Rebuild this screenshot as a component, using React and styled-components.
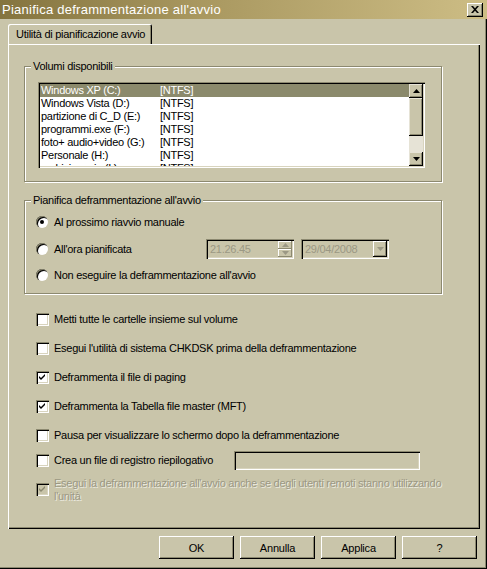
import React from 'react';
import styled, { createGlobalStyle } from 'styled-components';

const Global = createGlobalStyle`
  html, body { margin: 0; padding: 0; background: #c9c5aa; }
  * { box-sizing: border-box; }
`;

const Window = styled.div`
  width: 487px;
  height: 569px;
  background: #c9c5aa;
  display: flex;
  flex-direction: column;
  font-family: "Liberation Sans", Arial, sans-serif;
  font-size: 11px;
  letter-spacing: -0.27px;
  color: #000;
  box-shadow: inset -1px -1px 0 #000, inset -2px -2px 0 #8c8970;
  overflow: hidden;
`;

const TitleBar = styled.div`
  height: 19px;
  display: flex;
  align-items: center;
  justify-content: space-between;
  padding: 0 4px 0 2px;
  background: linear-gradient(to right, #84743f 0%, #a8975f 40%, #cdbd85 100%);
`;

const Title = styled.div`
  color: #fff;
  font-size: 13px;
  letter-spacing: 0.25px;
`;

const CloseBtn = styled.div`
  width: 16px;
  height: 14px;
  background: #c9c5aa;
  box-shadow: inset -1px -1px 0 #000, inset 1px 1px 0 #fff, inset -2px -2px 0 #8c8970;
  display: flex;
  align-items: center;
  justify-content: center;
`;

const Body = styled.div`
  padding: 5px 7px 0 8px;
  display: flex;
  flex-direction: column;
`;

const TabStrip = styled.div`
  display: flex;
  height: 20px;
`;

const Tab = styled.div`
  padding: 0 7px 0 8px;
  display: flex;
  align-items: center;
  height: 20px;
  background: #c9c5aa;
  border-radius: 2px 2px 0 0;
  box-shadow: inset 1px 1px 0 #fff, inset -1px 0 0 #000, inset -2px 0 0 #8c8970;
  position: relative;
  z-index: 1;
  margin-bottom: -1px;
`;

const Panel = styled.div`
  height: 485px;
  box-shadow: inset 1px 1px 0 #fff, inset -1px -1px 0 #000, inset -2px -2px 0 #8c8970;
  padding: 0 0 0 16px;
  display: flex;
  flex-direction: column;
`;

const Group = styled.div`
  position: relative;
  width: 418px;
  height: ${p => p.$h}px;
  margin-top: ${p => p.$mt}px;
  border: 1px solid #8c8970;
  box-shadow: inset 1px 1px 0 #fff, 1px 1px 0 #fff;
  padding: ${p => p.$pad};
`;

const Legend = styled.div`
  position: absolute;
  top: -7px;
  left: 6px;
  padding: 0 2px;
  background: #c9c5aa;
  line-height: 13px;
`;

const ListBox = styled.div`
  width: 387px;
  height: 86px;
  background: #fff;
  box-shadow: inset 1px 1px 0 #8c8970, inset 2px 2px 0 #000, inset -1px -1px 0 #fff, inset -2px -2px 0 #d8d4be;
  padding: 2px;
  display: flex;
  overflow: hidden;
`;

const Rows = styled.div`
  flex: 1;
  overflow: hidden;
`;

const Row = styled.div`
  display: flex;
  height: 13px;
  line-height: 13px;
  padding-left: 1px;
  background: ${p => (p.$sel ? '#8b8a6c' : 'transparent')};
  color: ${p => (p.$sel ? '#fff' : '#000')};
`;

const NameCell = styled.div`
  width: 119px;
  white-space: nowrap;
`;

const ScrollBar = styled.div`
  width: 14px;
  display: flex;
  flex-direction: column;
  background: #e6e3d6;
`;

const ScrollBtn = styled.div`
  height: ${p => p.$h}px;
  background: #c9c5aa;
  box-shadow: inset -1px -1px 0 #000, inset 1px 1px 0 #e6e3d6, inset -2px -2px 0 #8c8970;
  display: flex;
  align-items: center;
  justify-content: center;
`;

const Track = styled.div`
  flex: 1;
`;

const OptRow = styled.div`
  display: flex;
  align-items: center;
  height: ${p => p.$h || 26}px;
  margin-top: ${p => p.$mt || 0}px;
  padding-left: ${p => p.$pl || 0}px;
`;

const Radio = styled.div`
  width: 12px;
  height: 12px;
  border-radius: 50%;
  background: #fff;
  box-shadow: inset 1px 1px 0 #8c8970, inset 2px 2px 0 #000;
  display: flex;
  align-items: center;
  justify-content: center;
  margin-right: 6px;
  flex-shrink: 0;
  &::after {
    content: '';
    width: 4px;
    height: 4px;
    border-radius: 50%;
    background: ${p => (p.$on ? '#000' : 'transparent')};
  }
`;

const Label = styled.span`
  white-space: nowrap;
  flex-shrink: 0;
  width: ${p => (p.$w ? `${p.$w}px` : 'auto')};
  color: ${p => (p.$dis ? '#9b9884' : '#000')};
`;

const Field = styled.div`
  height: 20px;
  width: ${p => p.$w}px;
  margin-left: ${p => p.$ml}px;
  display: flex;
  align-items: center;
  justify-content: space-between;
  padding: 0 2px 0 4px;
  color: #9b9884;
  box-shadow: inset 1px 1px 0 #8c8970, inset 2px 2px 0 #000, inset -1px -1px 0 #fff, inset -2px -2px 0 #d8d4be;
`;

const Spin = styled.div`
  width: 14px;
  height: 16px;
  display: flex;
  flex-direction: column;
`;

const SpinHalf = styled.div`
  flex: 1;
  box-shadow: inset -1px -1px 0 #8c8970, inset 1px 1px 0 #fff;
  display: flex;
  align-items: center;
  justify-content: center;
`;

const DropBtn = styled.div`
  width: 14px;
  height: 16px;
  box-shadow: inset -1px -1px 0 #000, inset 1px 1px 0 #fff, inset -2px -2px 0 #8c8970;
  display: flex;
  align-items: center;
  justify-content: center;
`;

const Check = styled.div`
  width: 13px;
  height: 13px;
  flex-shrink: 0;
  margin-right: 5px;
  background: ${p => (p.$dis ? '#c9c5aa' : '#fff')};
  box-shadow: inset 1px 1px 0 #8c8970, inset 2px 2px 0 #000, inset -1px -1px 0 #fff, inset -2px -2px 0 #d8d4be;
  display: flex;
  align-items: center;
  justify-content: center;
  align-self: ${p => (p.$top ? 'flex-start' : 'center')};
  margin-top: ${p => (p.$top ? 6 : 0)}px;
`;

const LogBox = styled.div`
  width: 186px;
  height: 19px;
  margin-left: 10px;
  box-shadow: inset 1px 1px 0 #8c8970, inset 2px 2px 0 #000, inset -1px -1px 0 #fff, inset -2px -2px 0 #d8d4be;
`;

const TwoLine = styled.div`
  align-self: flex-start;
  line-height: 13px;
  color: #9b9884;
  text-shadow: 1px 1px 0 #ecebe0;
  width: 405px;
`;

const ButtonRow = styled.div`
  display: flex;
  justify-content: flex-end;
  gap: 6px;
  padding: 7px 10px 0 0;
`;

const Button = styled.button`
  width: 75px;
  height: 23px;
  font-family: inherit;
  font-size: 11px;
  letter-spacing: -0.2px;
  background: #c9c5aa;
  border: 0;
  padding: 0;
  color: #000;
  box-shadow: inset -1px -1px 0 #000, inset 1px 1px 0 #fff, inset -2px -2px 0 #8c8970;
`;

const Tick = ({ color = '#000' }) => (
  <svg width="7" height="7" viewBox="0 0 7 7">
    <path d="M0 2 L2 4 L6 0 L6 2 L2 6 L0 4 Z" fill={color} />
  </svg>
);

const Arrow = ({ down, color = '#000' }) => (
  <svg width="7" height="4" viewBox="0 0 7 4">
    <path d={down ? 'M0 0 H7 L3.5 4 Z' : 'M0 4 H7 L3.5 0 Z'} fill={color} />
  </svg>
);

const volumes = [
  ['Windows XP (C:)', '[NTFS]'],
  ['Windows Vista (D:)', '[NTFS]'],
  ['partizione di  C_D (E:)', '[NTFS]'],
  ['programmi.exe (F:)', '[NTFS]'],
  ['foto+ audio+video (G:)', '[NTFS]'],
  ['Personale (H:)', '[NTFS]'],
  ['archivio vario (I:)', '[NTFS]'],
];

const checks = [
  { text: 'Metti tutte le cartelle insieme sul volume', on: false, mt: 12 },
  { text: "Esegui l'utilità di sistema CHKDSK prima della deframmentazione", on: false, mt: 3 },
  { text: 'Deframmenta il file di paging', on: true, mt: 3 },
  { text: 'Deframmenta la Tabella file master (MFT)', on: true, mt: 3 },
  { text: 'Pausa per visualizzare lo schermo dopo la deframmentazione', on: false, mt: 3 },
];

export default function App() {
  return (
    <Window>
      <Global />
      <TitleBar>
        <Title>Pianifica deframmentazione all'avvio</Title>
        <CloseBtn>
          <svg width="8" height="7" viewBox="0 0 8 7">
            <path d="M0 0 L2 0 L4 2.3 L6 0 L8 0 L5 3.5 L8 7 L6 7 L4 4.7 L2 7 L0 7 L3 3.5 Z" fill="#000" />
          </svg>
        </CloseBtn>
      </TitleBar>
      <Body>
        <TabStrip>
          <Tab>Utilità di pianificazione avvio</Tab>
        </TabStrip>
        <Panel>
          <Group $h={116} $mt={22} $pad="15px 0 0 13px">
            <Legend>Volumi disponibili</Legend>
            <ListBox>
              <Rows>
                {volumes.map((v, i) => (
                  <Row key={v[0]} $sel={i === 0}>
                    <NameCell>{v[0]}</NameCell>
                    <span>{v[1]}</span>
                  </Row>
                ))}
              </Rows>
              <ScrollBar>
                <ScrollBtn $h={14}><Arrow /></ScrollBtn>
                <ScrollBtn $h={38} />
                <Track />
                <ScrollBtn $h={14}><Arrow down /></ScrollBtn>
              </ScrollBar>
            </ListBox>
          </Group>

          <Group $h={94} $mt={18} $pad="8px 0 0 11px">
            <Legend>Pianifica deframmentazione all'avvio</Legend>
            <OptRow>
              <Radio $on />
              <Label>Al prossimo riavvio manuale</Label>
            </OptRow>
            <OptRow $h={27}>
              <Radio />
              <Label $w={140}>All'ora pianificata</Label>
              <Field $w={88} $ml={12}>
                <span>21.26.45</span>
                <Spin>
                  <SpinHalf><Arrow color="#9b9884" /></SpinHalf>
                  <SpinHalf><Arrow down color="#9b9884" /></SpinHalf>
                </Spin>
              </Field>
              <Field $w={88} $ml={7}>
                <span>29/04/2008</span>
                <DropBtn><Arrow down color="#9b9884" /></DropBtn>
              </Field>
            </OptRow>
            <OptRow>
              <Radio />
              <Label>Non eseguire la deframmentazione all'avvio</Label>
            </OptRow>
          </Group>

          {checks.map(c => (
            <OptRow key={c.text} $h={26} $mt={c.mt} $pl={12}>
              <Check>{c.on && <Tick />}</Check>
              <Label>{c.text}</Label>
            </OptRow>
          ))}
          <OptRow $h={22} $mt={1} $pl={12}>
            <Check />
            <Label $w={170}>Crea un file di registro riepilogativo</Label>
            <LogBox />
          </OptRow>
          <OptRow $h={30} $mt={6} $pl={12}>
            <Check $dis $top><Tick color="#8c8970" /></Check>
            <TwoLine>
              Esegui la deframmentazione all'avvio anche se degli utenti remoti stanno utilizzando l'unità
            </TwoLine>
          </OptRow>
        </Panel>
      </Body>
      <ButtonRow>
        <Button>OK</Button>
        <Button>Annulla</Button>
        <Button>Applica</Button>
        <Button>?</Button>
      </ButtonRow>
    </Window>
  );
}
